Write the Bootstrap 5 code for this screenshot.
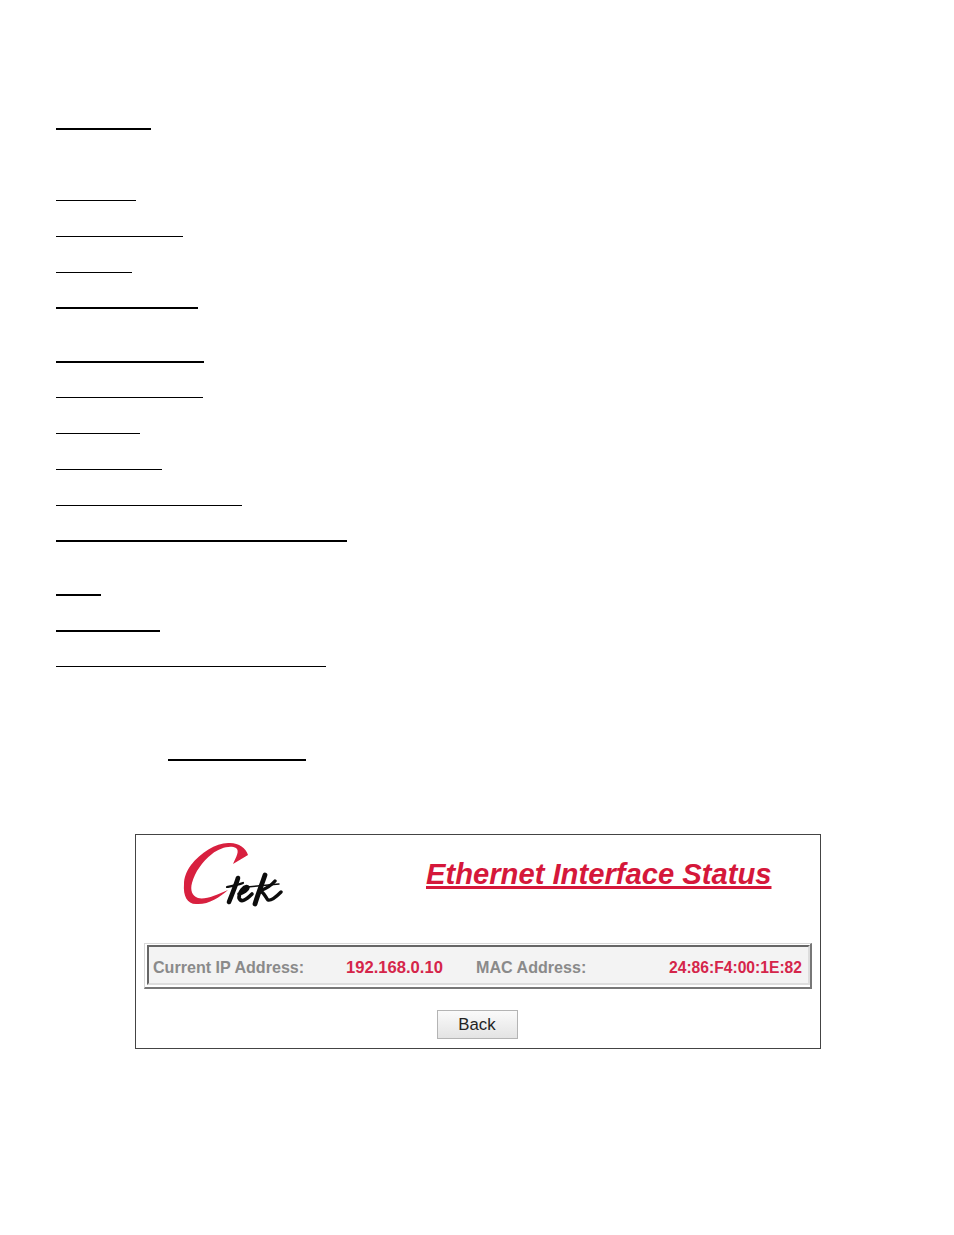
<!DOCTYPE html>
<html lang="en">
<head>
<meta charset="utf-8">
<title>Ethernet Interface Status</title>
<link href="https://cdn.jsdelivr.net/npm/bootstrap@5.3.0/dist/css/bootstrap.min.css" rel="stylesheet">
<style>
html,body{background:#fff;margin:0;height:1235px;overflow:hidden}
.sheet{width:954px;height:1235px;padding:128px 0 0 56px;font-family:"Liberation Sans",Arial,sans-serif}
.rule{background:#000;height:1px;margin:0}
.rule.thick{height:2px}
.w1{width:95px}.w2{width:80px;margin-top:70px}.w3{width:127px;margin-top:35px}.w4{width:76px;margin-top:35px}.w5{width:142px;margin-top:34px}
.w6{width:148px;margin-top:52px}.w7{width:147px;margin-top:34px}.w8{width:84px;margin-top:35px}.w9{width:106px;margin-top:35px}.w10{width:186px;margin-top:35px}.w11{width:291px;margin-top:34px}
.w12{width:45px;margin-top:52px}.w13{width:104px;margin-top:34px}.w14{width:270px;margin-top:34px}
.w15{width:138px;margin:92px 0 0 112px}
.shot{width:686px;height:215px;margin:73px 0 0 79px;border:1px solid #444;padding:0 8px;background:#fff}
.shot-head{height:108px}
.logo{width:104px;height:68px;margin:5px 0 0 37px;flex:none;filter:blur(.4px)}
.shot-title{font-size:29.2px;font-weight:700;font-style:italic;color:#d5173a;text-decoration:underline;text-decoration-thickness:3px;text-underline-offset:2px;margin:21px 0 0 141px;line-height:36px;white-space:nowrap}
.status{width:668px;height:46px;border:1px solid #d8d8d8;border-bottom:2px solid #777;border-right:2px solid #777;padding:1px 0 0 2px;background:#fff}
.status-in{height:40px;background:#f3f3f3;border:2px solid #666;border-right-color:#ddd;border-bottom-color:#ddd;padding:2px 6px 0 4px;font-size:16.1px;font-weight:700;line-height:37px;white-space:nowrap}
.lab{color:#8a8a8a}.val{color:#d5254a}
.ip{font-size:16.6px}.mac{font-size:15.65px}
.c1{width:193px}.c2{width:130px}.c3{width:193px}
.back{margin-top:21px;padding-right:2px}
.back .btn{width:81px;height:29px;padding:0;border:1px solid #b4b4b4;border-radius:0;background:linear-gradient(#fafafa,#e4e4e4);color:#222;font-size:16.8px;line-height:27px;font-family:"Liberation Sans",Arial,sans-serif}
</style>
</head>
<body>
<main class="sheet">
<div class="rule thick w1"></div>
<div class="rule w2"></div>
<div class="rule w3"></div>
<div class="rule w4"></div>
<div class="rule thick w5"></div>
<div class="rule thick w6"></div>
<div class="rule w7"></div>
<div class="rule w8"></div>
<div class="rule w9"></div>
<div class="rule w10"></div>
<div class="rule thick w11"></div>
<div class="rule thick w12"></div>
<div class="rule thick w13"></div>
<div class="rule w14"></div>
<div class="rule thick w15"></div>
<section class="shot">
<div class="shot-head d-flex align-items-start">
<svg class="logo" viewBox="0 0 104 68" aria-label="Ctek logo">
<path d="M67 15C65 8 58 3 49 3C36 2 20 12 10 25C5 32 3 38 3 44C2 56 6 64 15 64C27 65 38 58 47 50C36 55 24 60 17 58C11 56 9 50 11 43C14 32 21 22 31 14C39 8 49 5 55 8C59 11 55 17 52 24C57 21 62 18 67 15Z" fill="#d8203f"/>
<g fill="none" stroke="#0c0c0c" stroke-linecap="round" stroke-linejoin="round">
<path d="M46 47C51 46 57 45 62 43" stroke-width="2.2"/>
<path d="M57 38C55 45 51 54 48 62" stroke-width="4.6"/>
<path d="M58 54C62 53 67 50 67 47C63 45 58 52 58 58C60 63 65 60 71 54" stroke-width="3.6"/>
<path d="M84 35C81 44 77 54 74 64" stroke-width="4.8"/>
<path d="M94 41C89 47 84 49 79 51C83 52 85 58 87 60C90 61 95 57 100 52" stroke-width="3.4"/>
<path d="M66 47C76 46 87 45 98 44" stroke-width="1.4"/>
</g>
</svg>
<div class="shot-title">Ethernet Interface Status</div>
</div>
<div class="status">
<div class="status-in d-flex">
<span class="lab c1">Current IP Address:</span>
<span class="val ip c2">192.168.0.10</span>
<span class="lab c3">MAC Address:</span>
<span class="val mac flex-grow-1 text-end">24:86:F4:00:1E:82</span>
</div>
</div>
<div class="back text-center"><button type="button" class="btn">Back</button></div>
</section>
</main>
<script src="https://cdn.jsdelivr.net/npm/bootstrap@5.3.0/dist/js/bootstrap.bundle.min.js"></script>
</body>
</html>
